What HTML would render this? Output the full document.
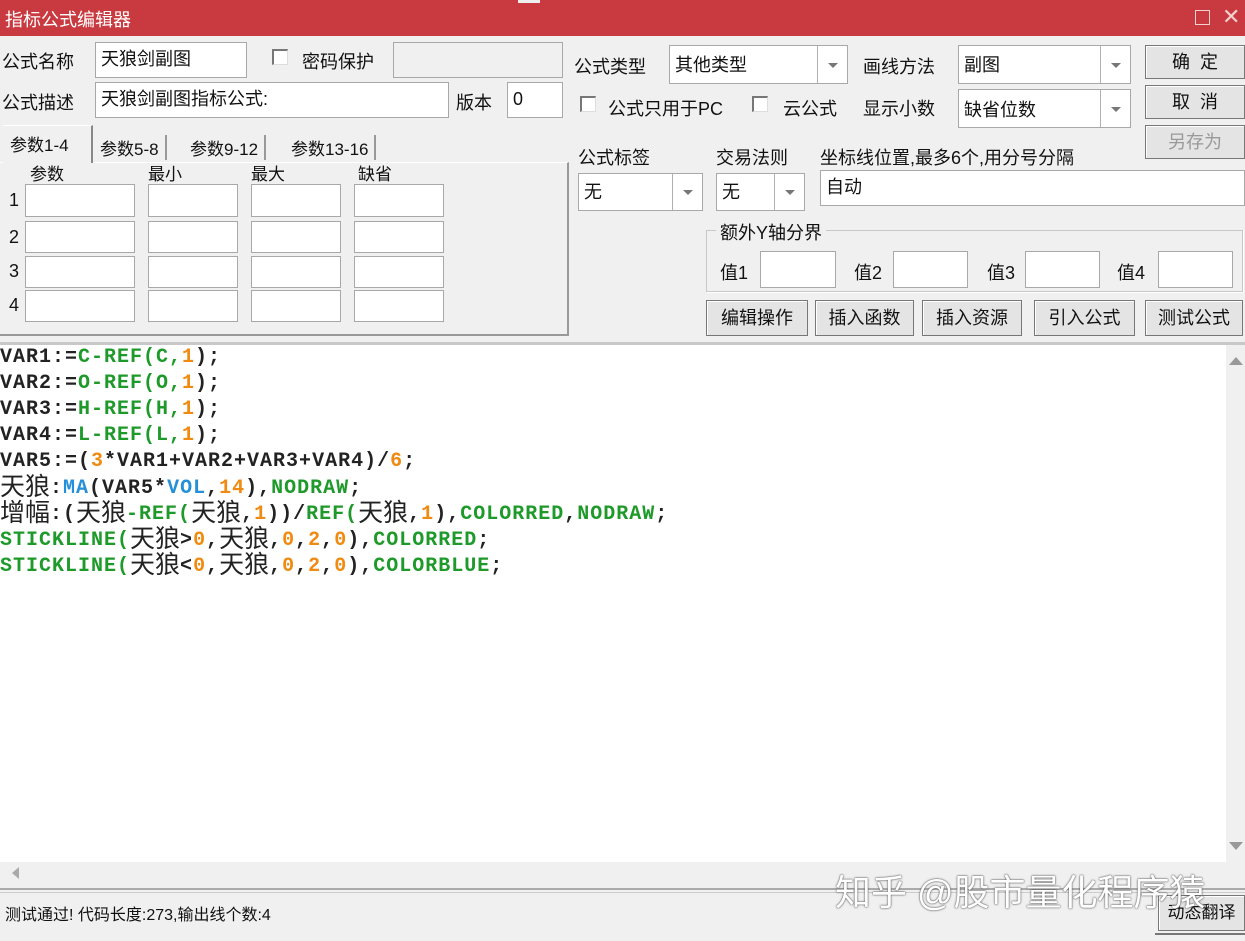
<!DOCTYPE html>
<html><head><meta charset="utf-8"><style>
*{box-sizing:border-box;margin:0;padding:0}
body{width:1245px;height:941px;background:#f0f0f0;position:relative;overflow:hidden;font-family:"Liberation Sans","Noto Sans CJK SC",sans-serif;font-size:18px;color:#111}
.a{position:absolute;white-space:nowrap}
.in{position:absolute;background:#fff;border:1px solid #a8a8a8;padding-left:5px;line-height:32px}
.sel .dd{position:absolute;top:0;bottom:0;border-left:1px solid #b0b0b0;width:30px;right:0}
.sel .dd:after{content:"";position:absolute;left:10px;top:50%;border:5px solid transparent;border-top:5px solid #777;margin-top:-2px}
.btn{position:absolute;background:#e4e4e4;border:1px solid #777;box-shadow:inset 1px 1px 0 #fff;text-align:center;font-size:18px}
.cb{position:absolute;width:16px;height:16px;border:2px solid #777;border-right:1px solid #ddd;border-bottom:1px solid #ddd;background:#fff}
.code{position:absolute;left:0;top:345px;font-family:"Liberation Mono","Noto Sans CJK SC",monospace;font-weight:bold;font-size:20px;letter-spacing:1px;line-height:26px;color:#222}
.code div{height:26px;overflow:visible}
.g{color:#1e9a2a}.o{color:#f08a10}.b{color:#2590d8}
.cj{font-family:"Noto Sans CJK SC",sans-serif;font-weight:normal;font-size:25px;letter-spacing:0;line-height:20px;display:inline-block;vertical-align:-2px}
</style></head><body>
<div class="a" style="left:0;top:0;width:1245px;height:36px;background:#c83a3f"></div>
<div class="a" style="left:518px;top:0;width:22px;height:3px;background:#eee"></div>
<div class="a" style="left:5px;top:6px;color:#fff;font-size:18px">指标公式编辑器</div>
<div class="a" style="left:1195px;top:10px;width:15px;height:15px;border:1.5px solid #f4d0d0"></div>
<div class="a" style="left:1222px;top:4px;color:#f4d0d0;font-size:22px">✕</div>

<div class="a" style="left:2px;top:48px">公式名称</div>
<div class="in" style="left:95px;top:42px;width:152px;height:36px">天狼剑副图</div>
<div class="cb" style="left:272px;top:49px"></div>
<div class="a" style="left:302px;top:48px">密码保护</div>
<div class="in" style="left:393px;top:42px;width:170px;height:36px;background:#f0f0f0"></div>

<div class="a" style="left:2px;top:89px">公式描述</div>
<div class="in" style="left:95px;top:82px;width:354px;height:36px">天狼剑副图指标公式:</div>
<div class="a" style="left:456px;top:89px">版本</div>
<div class="in" style="left:507px;top:82px;width:56px;height:36px">0</div>

<div class="a" style="left:0;top:162px;width:569px;height:174px;border-right:2px solid #999;border-bottom:2px solid #999;border-top:1px solid #fff"></div>
<div class="a" style="left:3px;top:125px;width:90px;height:38px;background:#f0f0f0;border-right:2px solid #888;border-top:1px solid #fff"></div>
<div class="a" style="left:10px;top:131px;font-size:17px">参数1-4</div>
<div class="a" style="left:100px;top:135px;font-size:17px;border-right:2px solid #999;padding-right:6px">参数5-8</div>
<div class="a" style="left:190px;top:135px;font-size:17px;border-right:2px solid #999;padding-right:6px">参数9-12</div>
<div class="a" style="left:291px;top:135px;font-size:17px;border-right:2px solid #999;padding-right:6px">参数13-16</div>
<div class="a" style="left:30px;top:160px;font-size:17px">参数</div>
<div class="a" style="left:148px;top:160px;font-size:17px">最小</div>
<div class="a" style="left:251px;top:160px;font-size:17px">最大</div>
<div class="a" style="left:358px;top:160px;font-size:17px">缺省</div>
<div class="a" style="left:9px;top:190px">1</div>
<div class="a" style="left:9px;top:227px">2</div>
<div class="a" style="left:9px;top:261px">3</div>
<div class="a" style="left:9px;top:295px">4</div>
<div class="in" style="left:25px;top:184px;width:110px;height:33px"></div><div class="in" style="left:148px;top:184px;width:90px;height:33px"></div><div class="in" style="left:251px;top:184px;width:90px;height:33px"></div><div class="in" style="left:354px;top:184px;width:90px;height:33px"></div>
<div class="in" style="left:25px;top:221px;width:110px;height:32px"></div><div class="in" style="left:148px;top:221px;width:90px;height:32px"></div><div class="in" style="left:251px;top:221px;width:90px;height:32px"></div><div class="in" style="left:354px;top:221px;width:90px;height:32px"></div>
<div class="in" style="left:25px;top:256px;width:110px;height:32px"></div><div class="in" style="left:148px;top:256px;width:90px;height:32px"></div><div class="in" style="left:251px;top:256px;width:90px;height:32px"></div><div class="in" style="left:354px;top:256px;width:90px;height:32px"></div>
<div class="in" style="left:25px;top:290px;width:110px;height:32px"></div><div class="in" style="left:148px;top:290px;width:90px;height:32px"></div><div class="in" style="left:251px;top:290px;width:90px;height:32px"></div><div class="in" style="left:354px;top:290px;width:90px;height:32px"></div>

<div class="a" style="left:574px;top:53px">公式类型</div>
<div class="in sel" style="left:669px;top:45px;width:179px;height:39px;line-height:38px">其他类型<div class="dd"></div></div>
<div class="a" style="left:863px;top:53px">画线方法</div>
<div class="in sel" style="left:958px;top:45px;width:173px;height:39px;line-height:38px">副图<div class="dd"></div></div>
<div class="btn" style="left:1145px;top:45px;width:100px;height:34px;line-height:32px">确&nbsp;&nbsp;定</div>
<div class="btn" style="left:1145px;top:85px;width:100px;height:34px;line-height:32px">取&nbsp;&nbsp;消</div>
<div class="btn" style="left:1145px;top:125px;width:100px;height:34px;line-height:32px;color:#999">另存为</div>

<div class="cb" style="left:580px;top:96px"></div>
<div class="a" style="left:608px;top:95px">公式只用于PC</div>
<div class="cb" style="left:752px;top:96px"></div>
<div class="a" style="left:783px;top:95px">云公式</div>
<div class="a" style="left:863px;top:95px">显示小数</div>
<div class="in sel" style="left:958px;top:89px;width:173px;height:39px;line-height:40px">缺省位数<div class="dd"></div></div>

<div class="a" style="left:578px;top:144px">公式标签</div>
<div class="a" style="left:716px;top:144px">交易法则</div>
<div class="a" style="left:820px;top:144px">坐标线位置,最多6个,用分号分隔</div>
<div class="in sel" style="left:578px;top:173px;width:125px;height:38px;line-height:36px">无<div class="dd"></div></div>
<div class="in sel" style="left:716px;top:173px;width:89px;height:38px;line-height:36px">无<div class="dd"></div></div>
<div class="in" style="left:820px;top:170px;width:425px;height:36px">自动</div>

<div class="a" style="left:706px;top:230px;width:537px;height:62px;border:1px solid #c8c8c8;box-shadow:1px 1px 0 #fff"></div>
<div class="a" style="left:716px;top:219px;background:#f0f0f0;padding:0 4px">额外Y轴分界</div>
<div class="a" style="left:720px;top:259px">值1</div><div class="in" style="left:760px;top:251px;width:76px;height:37px"></div>
<div class="a" style="left:854px;top:259px">值2</div><div class="in" style="left:893px;top:251px;width:75px;height:37px"></div>
<div class="a" style="left:987px;top:259px">值3</div><div class="in" style="left:1025px;top:251px;width:75px;height:37px"></div>
<div class="a" style="left:1117px;top:259px">值4</div><div class="in" style="left:1158px;top:251px;width:75px;height:37px"></div>

<div class="btn" style="left:706px;top:300px;width:102px;height:36px;line-height:34px">编辑操作</div>
<div class="btn" style="left:815px;top:300px;width:99px;height:36px;line-height:34px">插入函数</div>
<div class="btn" style="left:922px;top:300px;width:100px;height:36px;line-height:34px">插入资源</div>
<div class="btn" style="left:1034px;top:300px;width:101px;height:36px;line-height:34px">引入公式</div>
<div class="btn" style="left:1145px;top:300px;width:98px;height:36px;line-height:34px">测试公式</div>

<div class="a" style="left:0;top:342px;width:1245px;height:3px;background:#c8c8c8"></div>
<div class="a" style="left:0;top:345px;width:1226px;height:517px;background:#fff"></div>
<div class="a" style="left:1226px;top:345px;width:19px;height:517px;background:#f0f0f0"></div>
<div class="a" style="left:1229px;top:350px;border:7px solid transparent;border-bottom:8px solid #999"></div>
<div class="a" style="left:1229px;top:842px;border:7px solid transparent;border-top:8px solid #999"></div>
<div class="code">
<div>VAR1:=<span class="g">C-REF(C,</span><span class="o">1</span>);</div>
<div>VAR2:=<span class="g">O-REF(O,</span><span class="o">1</span>);</div>
<div>VAR3:=<span class="g">H-REF(H,</span><span class="o">1</span>);</div>
<div>VAR4:=<span class="g">L-REF(L,</span><span class="o">1</span>);</div>
<div>VAR5:=(<span class="o">3</span>*VAR1+VAR2+VAR3+VAR4)/<span class="o">6</span>;</div>
<div><span class="cj">天狼</span>:<span class="b">MA</span>(VAR5*<span class="b">VOL</span>,<span class="o">14</span>),<span class="g">NODRAW</span>;</div>
<div><span class="cj">增幅</span>:(<span class="cj">天狼</span><span class="g">-REF(</span><span class="cj">天狼</span>,<span class="o">1</span>))/<span class="g">REF(</span><span class="cj">天狼</span>,<span class="o">1</span>),<span class="g">COLORRED</span>,<span class="g">NODRAW</span>;</div>
<div><span class="g">STICKLINE(</span><span class="cj">天狼</span>&gt;<span class="o">0</span>,<span class="cj">天狼</span>,<span class="o">0</span>,<span class="o">2</span>,<span class="o">0</span>),<span class="g">COLORRED</span>;</div>
<div><span class="g">STICKLINE(</span><span class="cj">天狼</span>&lt;<span class="o">0</span>,<span class="cj">天狼</span>,<span class="o">0</span>,<span class="o">2</span>,<span class="o">0</span>),<span class="g">COLORBLUE</span>;</div>
</div>

<div class="a" style="left:0;top:862px;width:1245px;height:24px;background:#f0f0f0"></div>
<div class="a" style="left:6px;top:867px;border:6px solid transparent;border-right:7px solid #aaa"></div>
<div class="a" style="left:0;top:888px;width:1245px;height:5px;border-top:2px solid #aaa;border-bottom:1px solid #ccc"></div>
<div class="a" style="left:5px;top:901px;font-size:16px">测试通过! 代码长度:273,输出线个数:4</div>
<div class="btn" style="left:1158px;top:895px;width:87px;height:36px;line-height:34px;font-size:17px">动态翻译</div>
<div class="a" style="left:1155px;top:933px;width:90px;height:8px;border-top:2px solid #777"></div>
<div class="a" style="left:835px;top:864px;font-size:36px;color:#fff;text-shadow:0 0 2px #555,0 0 1px #555">知乎 @股市量化程序猿</div>
</body></html>
